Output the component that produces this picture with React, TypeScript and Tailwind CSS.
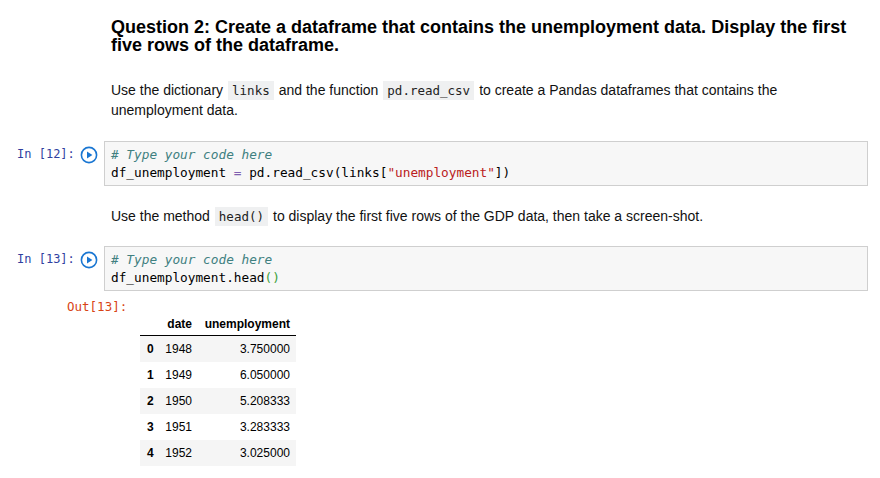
import React from "react";

const mono = { fontFamily: '"DejaVu Sans Mono", "Liberation Mono", monospace' };

function PlayIcon() {
  return (
    <svg width="18" height="18" viewBox="0 0 18 18" className="shrink-0">
      <circle cx="9" cy="9" r="7.6" fill="none" stroke="#1976d2" strokeWidth="1.6" />
      <path d="M7 5.4 L12.4 9 L7 12.6 Z" fill="#1976d2" />
    </svg>
  );
}

function Prompt({ n }: { n: number }) {
  return (
    <div className="w-[104px] shrink-0 flex items-start pl-[17px] pt-[4px]">
      <span className="text-[12px] leading-[19px] text-[#303f9f] w-[64px]" style={mono}>
        In&nbsp;[{n}]:
      </span>
      <div className="mt-[1px] -ml-[1px]">
        <PlayIcon />
      </div>
    </div>
  );
}

function CodeBox({ children }: { children: React.ReactNode }) {
  return (
    <div
      className="flex-1 mr-[12px] border border-[#cfcfcf] bg-[#f7f7f7] pl-[6px] py-[4px] text-[12.75px] leading-[17.5px] text-[#000] whitespace-pre"
      style={mono}
    >
      {children}
    </div>
  );
}

function IC({ children }: { children: React.ReactNode }) {
  return (
    <code
      className="inline-block mx-[5px] bg-[#eff0f1] px-[4px] py-[2px] text-[12.5px] leading-[15px] text-[#222]"
      style={mono}
    >
      {children}
    </code>
  );
}

const rows = [
  ["0", "1948", "3.750000"],
  ["1", "1949", "6.050000"],
  ["2", "1950", "5.208333"],
  ["3", "1951", "3.283333"],
  ["4", "1952", "3.025000"],
];

export default function App() {
  return (
    <div
      className="w-[880px] h-[478px] bg-white overflow-hidden text-black pt-[18px]"
      style={{ fontFamily: '"Liberation Sans", Arial, sans-serif' }}
    >
      <div className="pl-[111px] pr-[24px]">
        <h3 className="text-[18px] leading-[18px] font-bold">
          Question 2: Create a dataframe that contains the unemployment data. Display the first five rows of the dataframe.
        </h3>
        <p className="mt-[26px] text-[14px] leading-[20px] text-[#111]">
          <span>Use the dictionary</span>
          <IC>links</IC>
          <span>and the function</span>
          <IC>pd.read_csv</IC>
          <span>to create a Pandas dataframes that contains the</span>
          <br />
          <span>unemployment data.</span>
        </p>
      </div>

      <div className="flex mt-[21px]">
        <Prompt n={12} />
        <CodeBox>
          <div>
            <span className="italic text-[#408080]"># Type your code here</span>
          </div>
          <div>
            df_unemployment <span className="text-[#7f5fb0]">=</span> pd.read_csv(links[
            <span className="text-[#ba2121]">"unemployment"</span>])
          </div>
        </CodeBox>
      </div>

      <div className="pl-[111px] mt-[20px]">
        <p className="text-[14px] leading-[20px] text-[#111]">
          <span>Use the method</span>
          <IC>head()</IC>
          <span>to display the first five rows of the GDP data, then take a screen-shot.</span>
        </p>
      </div>

      <div className="flex mt-[20px]">
        <Prompt n={13} />
        <CodeBox>
          <div>
            <span className="italic text-[#408080]"># Type your code here</span>
          </div>
          <div>
            df_unemployment.head<span className="text-[#3ca13c]">()</span>
          </div>
        </CodeBox>
      </div>

      <div className="pl-[67px] mt-[7px] text-[12.5px] leading-[17px] text-[#d84315]" style={mono}>
        Out[13]:
      </div>

      <div className="ml-[140px] w-[156px] text-[12px] mt-[-3px]">
        <div className="flex h-[24px] items-center font-bold border-b border-black">
          <div className="w-[21px]"></div>
          <div className="w-[37px] text-right pr-[6px]">date</div>
          <div className="w-[98px] text-right pr-[6px]">unemployment</div>
        </div>
        {rows.map((r, i) => (
          <div
            key={r[0]}
            className={`flex h-[26px] items-center ${i % 2 === 0 ? "bg-[#f5f5f5]" : "bg-white"}`}
          >
            <div className="w-[21px] pl-[7px] font-bold">{r[0]}</div>
            <div className="w-[37px] text-right pr-[6px]">{r[1]}</div>
            <div className="w-[98px] text-right pr-[6px]">{r[2]}</div>
          </div>
        ))}
      </div>
    </div>
  );
}
